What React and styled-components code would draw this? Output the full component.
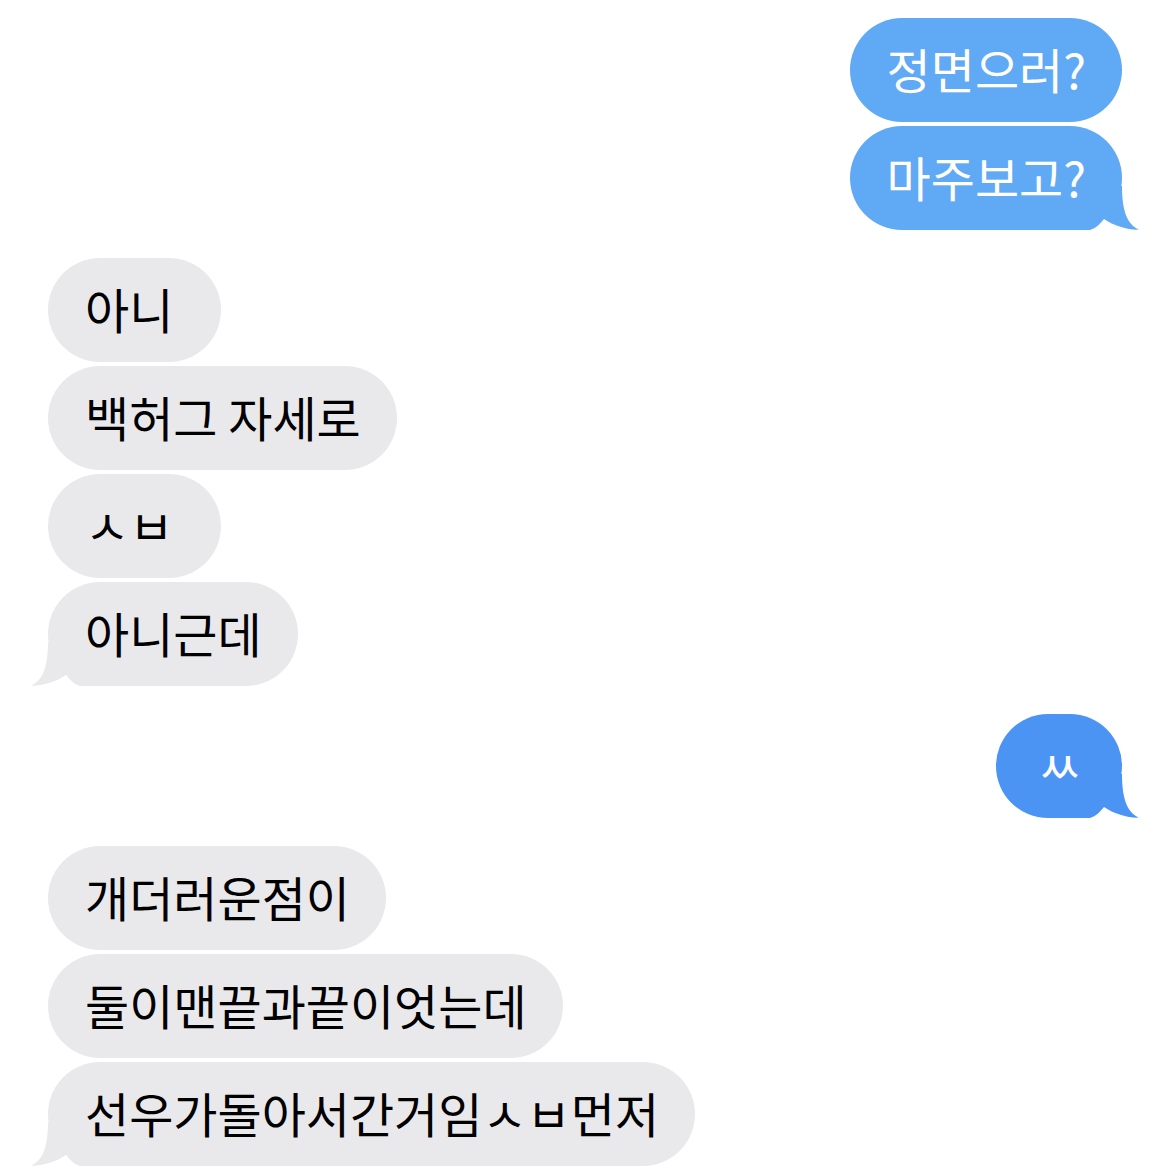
import React from 'react'
import styled, { createGlobalStyle } from 'styled-components'

const colors = {
  gray: '#e9e9eb',
  blue: '#5fa9f5',
  blueDeep: '#4b94f4',
  ink: '#000000',
}

const GlobalStyle = createGlobalStyle`
  html, body {
    margin: 0;
    padding: 0;
    background: #ffffff;
  }
  body {
    font-family: "Noto Sans CJK KR", "Noto Sans", sans-serif;
  }
`

const Thread = styled.div`
  display: flex;
  flex-direction: column;
  gap: 28px;
  padding: 18px 47px 8px 48px;
  width: 1169px;
  box-sizing: border-box;
`

const Group = styled.div`
  display: flex;
  flex-direction: column;
  gap: 4px;
  align-items: ${p => (p.$sent ? 'flex-end' : 'flex-start')};
`

const Bubble = styled.div`
  position: relative;
  display: inline-flex;
  align-items: center;
  justify-content: ${p => (p.$center ? 'center' : 'flex-start')};
  box-sizing: border-box;
  height: 104px;
  min-width: ${p => p.$minWidth || 0}px;
  padding: 0 36px 4px 37px;
  border-radius: 52px;
  font-size: 48px;
  line-height: 1;
  white-space: nowrap;
  background: ${p => p.$bg};
  color: ${p => (p.$sent ? '#ffffff' : colors.ink)};
`

const Label = styled.span`
  position: relative;
  z-index: 1;
`

const TailSvg = styled.svg`
  position: absolute;
  bottom: 0;
  width: 74px;
  height: 44px;
  ${p => (p.$sent ? 'right: -18px;' : 'left: -18px; transform: scaleX(-1);')}
`

function Tail({ sent, color }) {
  return (
    <TailSvg $sent={sent} viewBox="0 0 74 44">
      <path
        d="M0 44 L0 0 L56 0 C56 22 60 38 73 43.6 C64 44.4 48 40 38 33 C34 38 30 42 24 44 Z"
        fill={color}
      />
    </TailSvg>
  )
}

function Message({ sent, tail, bg, minWidth, center, children }) {
  const fill = bg || (sent ? colors.blue : colors.gray)
  return (
    <Bubble $sent={sent} $bg={fill} $minWidth={minWidth} $center={center}>
      <Label>{children}</Label>
      {tail && <Tail sent={sent} color={fill} />}
    </Bubble>
  )
}

export default function App() {
  return (
    <>
      <GlobalStyle />
      <Thread>
        <Group $sent>
          <Message sent>정면으러?</Message>
          <Message sent tail>마주보고?</Message>
        </Group>
        <Group>
          <Message minWidth={173}>아니</Message>
          <Message>백허그 자세로</Message>
          <Message minWidth={173}>ㅅㅂ</Message>
          <Message tail>아니근데</Message>
        </Group>
        <Group $sent>
          <Message sent tail bg={colors.blueDeep} minWidth={126} center>
            ㅆ
          </Message>
        </Group>
        <Group>
          <Message>개더러운점이</Message>
          <Message>둘이맨끝과끝이엇는데</Message>
          <Message tail>선우가돌아서간거임ㅅㅂ먼저</Message>
        </Group>
      </Thread>
    </>
  )
}
